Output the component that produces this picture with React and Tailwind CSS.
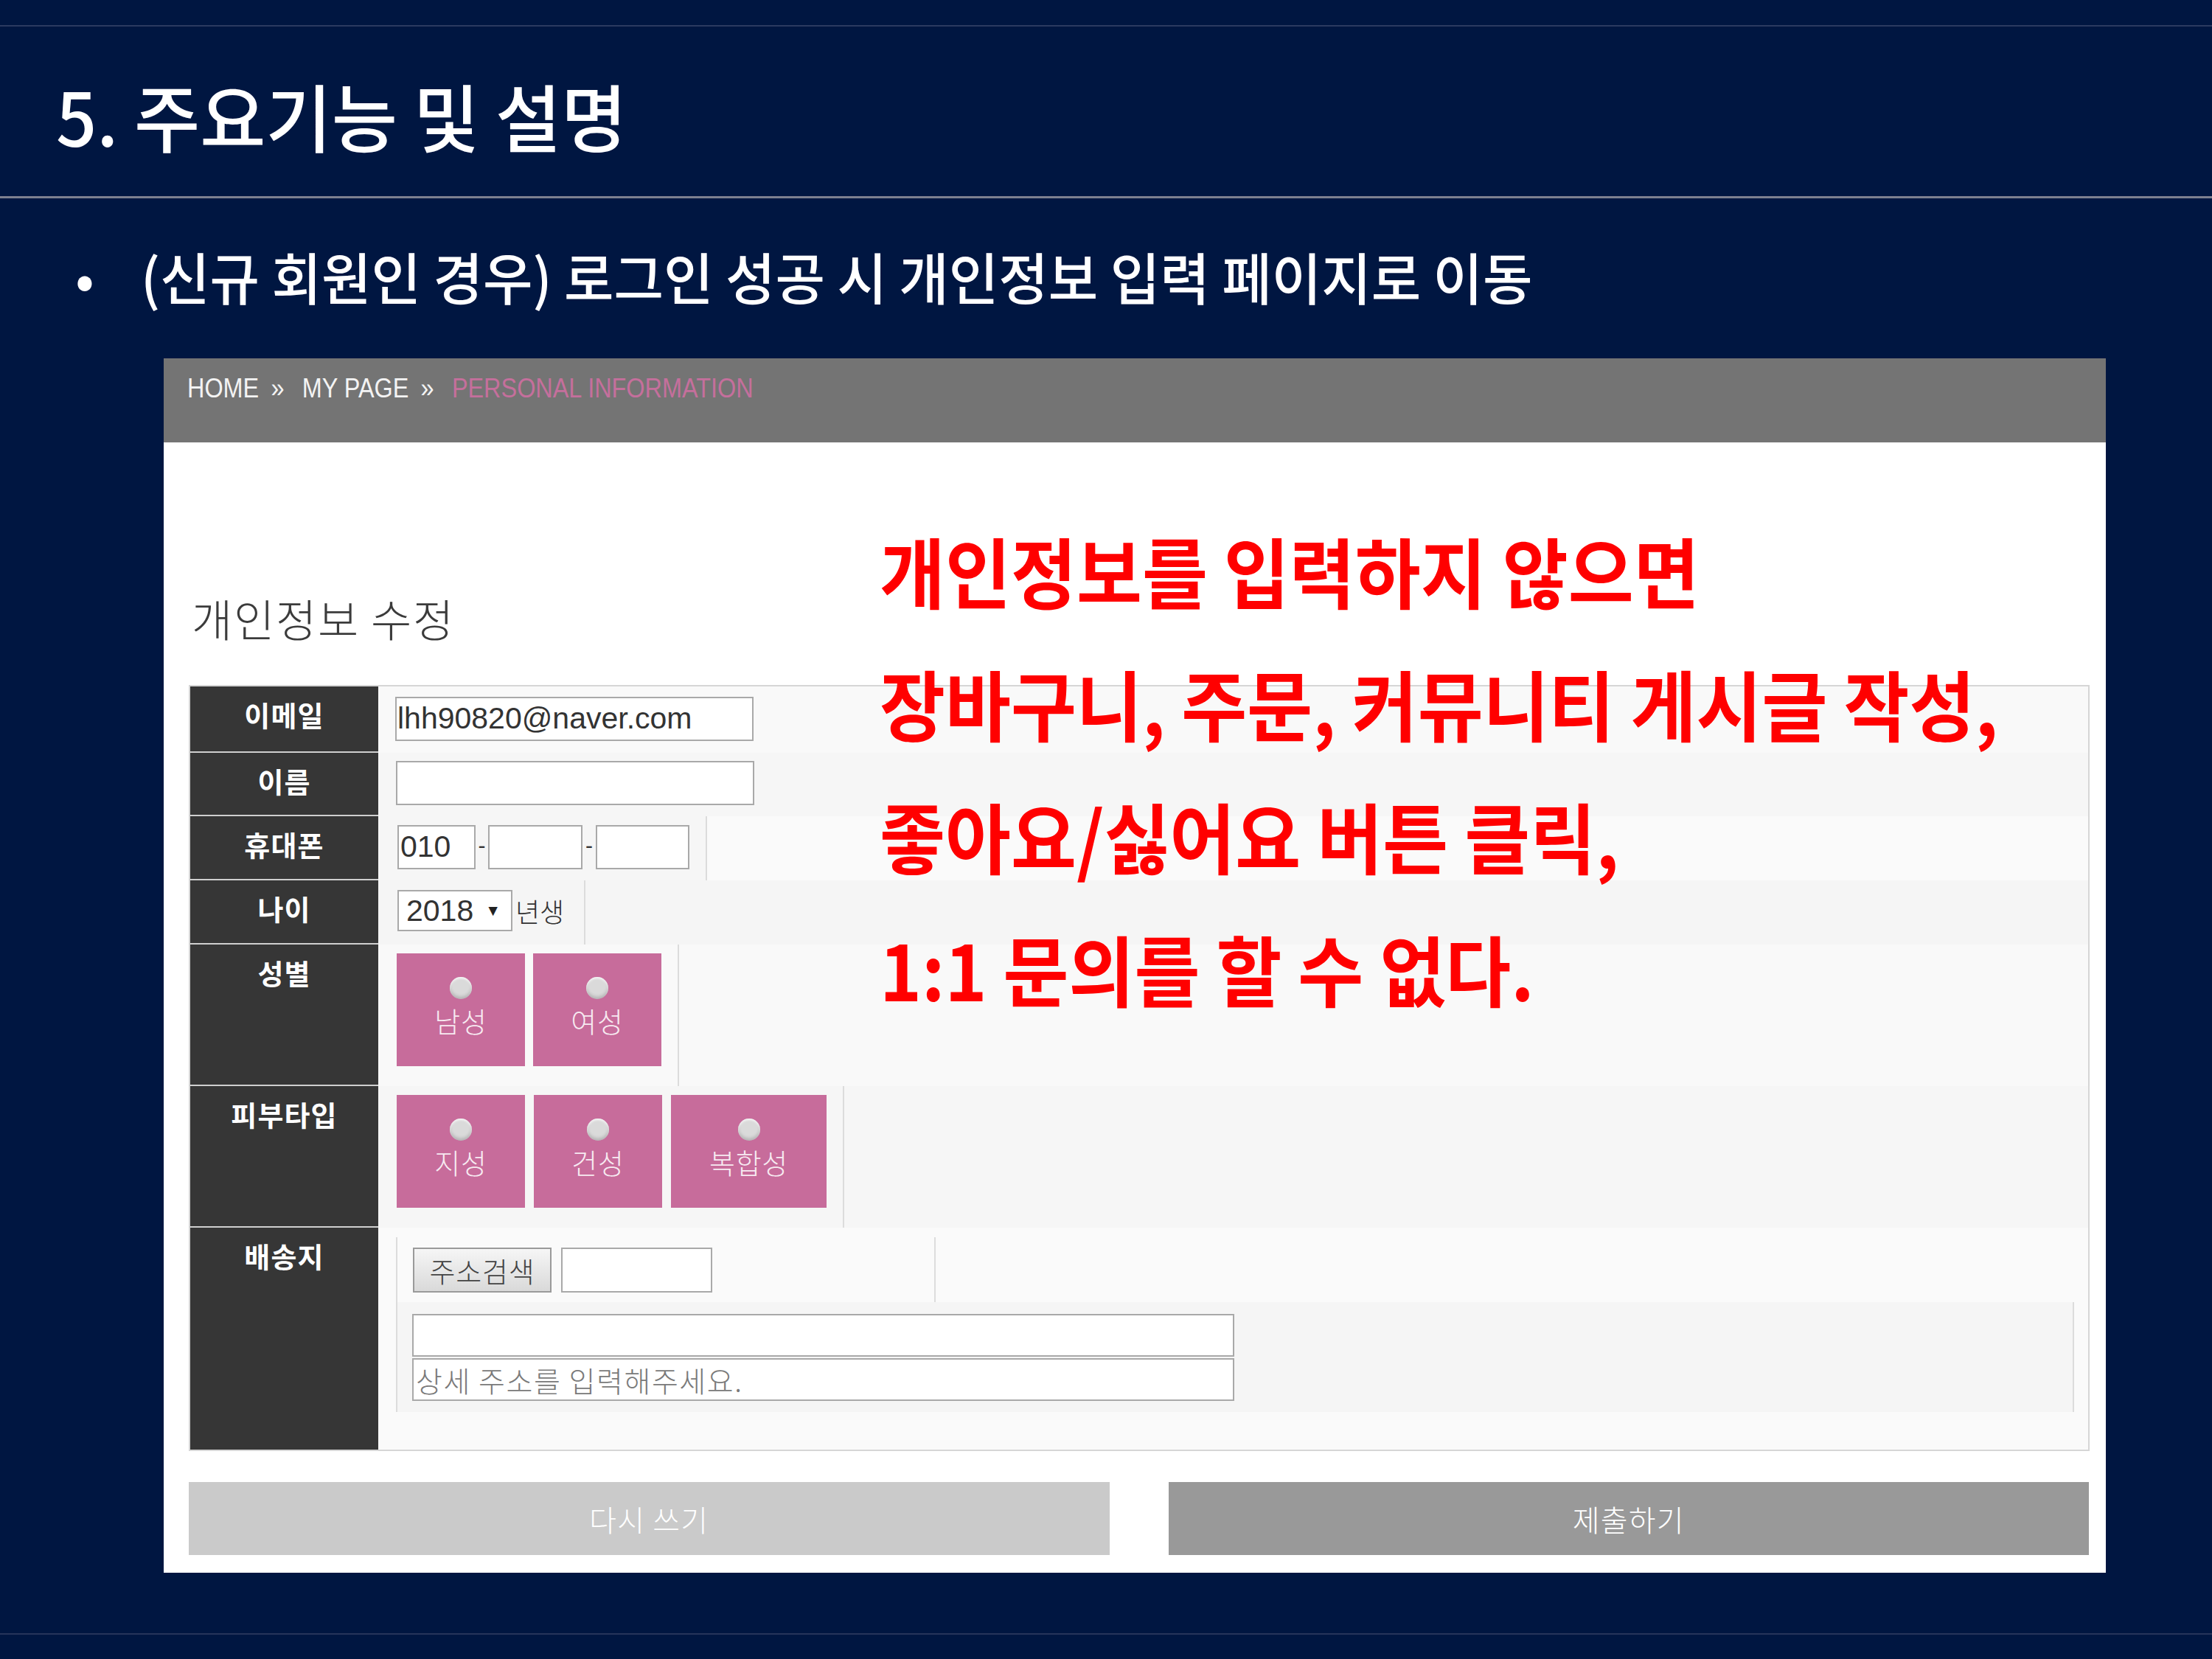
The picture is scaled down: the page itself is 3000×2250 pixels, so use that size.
const LATIN = "font-['Liberation_Sans',Arial,sans-serif]"

function Label({ children, last }) {
  return (
    <div
      className={[
        'w-[255px] shrink-0 bg-[#363636] pt-[19px] text-center text-[38px] font-bold leading-[38px] tracking-[0.03em] text-white',
        last ? '' : 'border-b-2 border-[#cfcfcf]',
      ].join(' ')}
    >
      {children}
    </div>
  )
}

function Field({ className, value, placeholder }) {
  return (
    <input
      readOnly
      defaultValue={value}
      placeholder={placeholder}
      className={[
        'border-2 border-[#a9a9a9] bg-white px-[1px] text-[41px] text-[#333] outline-none',
        LATIN,
        className,
      ].join(' ')}
    />
  )
}

function Choice({ label, wide }) {
  return (
    <div
      className={[
        'flex h-[153px] flex-col items-center bg-[#c76c9b]',
        wide ? 'w-[211px]' : 'w-[174px]',
      ].join(' ')}
    >
      <div className="mt-[32px] h-[30px] w-[30px] rounded-full bg-[#dadada] shadow-[inset_0_2px_3px_rgba(255,255,255,0.8),inset_0_-3px_4px_rgba(0,0,0,0.18)]" />
      <div className="mt-[10px] text-[38px] font-light leading-[38px] tracking-[0.02em] text-[#f7eaf1]">{label}</div>
    </div>
  )
}

export default function App() {
  return (
    <div className="relative h-[2250px] w-[3000px] overflow-hidden bg-[#001641] font-['Noto_Sans_CJK_KR','Noto_Sans',sans-serif] text-white">
      <div className="mt-[34px] h-[2px] bg-[#2b3a60]" />

      <div className="mt-[70px] h-[100px] pl-[76px]">
        <div className="origin-left scale-x-[0.97] whitespace-nowrap text-[100px] font-medium leading-[100px]">
          5. 주요기능 및 설명
        </div>
      </div>

      <div className="mt-[60px] h-[3px] bg-[#7d8090]" />

      <div className="mt-[65px] flex h-[80px] items-center pl-[100px]">
        <span className="w-[30px] text-center text-[76px] leading-[80px]">•</span>
        <div className="ml-[61px] origin-left scale-x-[0.965] whitespace-nowrap text-[76px] font-medium leading-[80px]">
          (신규 회원인 경우) 로그인 성공 시 개인정보 입력 페이지로 이동
        </div>
      </div>

      <div className="relative ml-[222px] mt-[72px] h-[1647px] w-[2634px] bg-white">
        <div className="h-[114px] bg-[#747474] pl-[32px] pt-[21px]">
          <div className={`flex origin-left scale-x-[0.9] whitespace-nowrap text-[36px] leading-[40px] ${LATIN}`}>
            <span className="text-[#f3f3f3]">HOME</span>
            <span className="ml-[18px] mr-[27px] text-[#f3f3f3]">»</span>
            <span className="text-[#f3f3f3]">MY PAGE</span>
            <span className="ml-[18px] mr-[27px] text-[#f3f3f3]">»</span>
            <span className="text-[#c56f9c]">PERSONAL INFORMATION</span>
          </div>
        </div>

        <div className="mt-[208px] pl-[38px] text-[60px] font-light leading-[60px] tracking-[0.03em] text-[#3b3b3b]">
          개인정보 수정
        </div>

        <div className="ml-[34px] mr-[22px] mt-[61px] border-2 border-[#d6d6d6]">
          <div className="flex h-[90px]">
            <Label>이메일</Label>
            <div className="flex-1 bg-[#f9f9f9] pl-[23px] pt-[14px]">
              <Field className="h-[60px] w-[486px]" value="lhh90820@naver.com" />
            </div>
          </div>

          <div className="flex h-[86px]">
            <Label>이름</Label>
            <div className="flex-1 bg-[#f6f6f6] pl-[24px] pt-[11px]">
              <Field className="h-[60px] w-[486px]" value="" />
            </div>
          </div>

          <div className="flex h-[87px]">
            <Label>휴대폰</Label>
            <div className="flex flex-1 bg-[#fafafa]">
              <div className="flex w-[446px] items-start border-r-2 border-[#dcdcdc] bg-[#f6f6f6] pl-[26px] pt-[12px]">
                <Field className="h-[60px] w-[106px] pl-[2px]" value="010" />
                <span className={`w-[17px] text-center text-[30px] leading-[56px] text-[#333] ${LATIN}`}>-</span>
                <Field className="h-[60px] w-[128px]" value="" />
                <span className={`w-[18px] text-center text-[30px] leading-[56px] text-[#333] ${LATIN}`}>-</span>
                <Field className="h-[60px] w-[127px]" value="" />
              </div>
            </div>
          </div>

          <div className="flex h-[87px]">
            <Label>나이</Label>
            <div className="flex flex-1 bg-[#f5f5f5]">
              <div className="w-[281px] border-r-2 border-[#dcdcdc] pl-[26px] pt-[13px]">
                <div className="flex h-[56px] items-center">
                  <div className={`flex h-[56px] w-[156px] items-center border-2 border-[#a9a9a9] bg-white pl-[10px] text-[#333] ${LATIN}`}>
                    <span className="text-[41px] leading-[40px]">2018</span>
                    <span className="ml-[16px] text-[21px] leading-[22px] text-[#222]">▼</span>
                  </div>
                  <span className="ml-[4px] text-[36px] font-light leading-[36px] text-[#333]">년생</span>
                </div>
              </div>
            </div>
          </div>

          <div className="flex h-[192px]">
            <Label>성별</Label>
            <div className="flex flex-1 bg-[#f9f9f9]">
              <div className="flex w-[408px] gap-[11px] border-r-2 border-[#dcdcdc] pl-[25px] pt-[12px]">
                <Choice label="남성" />
                <Choice label="여성" />
              </div>
            </div>
          </div>

          <div className="flex h-[192px]">
            <Label>피부타입</Label>
            <div className="flex flex-1 bg-[#f6f6f6]">
              <div className="flex w-[632px] gap-[12px] border-r-2 border-[#dcdcdc] pl-[25px] pt-[12px]">
                <Choice label="지성" />
                <Choice label="건성" />
                <Choice label="복합성" wide />
              </div>
            </div>
          </div>

          <div className="flex h-[301px]">
            <Label last>배송지</Label>
            <div className="flex-1 bg-[#fafafa] pl-[24px] pt-[13px]">
              <div className="flex h-[88px] w-[732px] gap-[13px] border-x-2 border-[#dcdcdc] pl-[21px] pt-[14px]">
                <button className="h-[61px] w-[188px] border-2 border-[#9a9a9a] bg-linear-to-b from-[#f6f6f6] to-[#d9d9d9] text-[38px] font-light leading-[38px] tracking-[0.02em] text-[#444]">
                  주소검색
                </button>
                <Field className="h-[61px] w-[205px]" value="" />
              </div>
              <div className="flex h-[149px] w-[2276px] flex-col gap-[2px] border-x-2 border-[#dcdcdc] bg-[#f5f5f5] pl-[20px] pt-[16px]">
                <Field className="h-[58px] w-[1115px]" value="" />
                <input
                  readOnly
                  placeholder="상세 주소를 입력해주세요."
                  className="h-[58px] w-[1115px] border-2 border-[#a9a9a9] bg-white px-[3px] text-[39px] font-light tracking-[0.04em] text-[#333] outline-none placeholder:text-[#7a7a7a]"
                />
              </div>
            </div>
          </div>
        </div>

        <div className="ml-[34px] mr-[23px] mt-[42px] flex gap-[80px]">
          <button className="flex h-[99px] flex-1 items-center justify-center bg-[#cacaca] text-[40px] font-light tracking-[0.03em] text-white">
            다시 쓰기
          </button>
          <button className="flex h-[99px] flex-1 items-center justify-center bg-[#999999] text-[40px] font-light tracking-[0.03em] text-white">
            제출하기
          </button>
        </div>

        <div className="absolute left-[971px] top-[197px] origin-left scale-x-[0.93] whitespace-nowrap text-[104px] font-bold leading-[180px] text-[#ff0000]">
          <div>개인정보를 입력하지 않으면</div>
          <div>장바구니, 주문, 커뮤니티 게시글 작성,</div>
          <div>좋아요/싫어요 버튼 클릭,</div>
          <div>1:1 문의를 할 수 없다.</div>
        </div>
      </div>

      <div className="mt-[82px] h-[2px] bg-[#26345a]" />
    </div>
  )
}
